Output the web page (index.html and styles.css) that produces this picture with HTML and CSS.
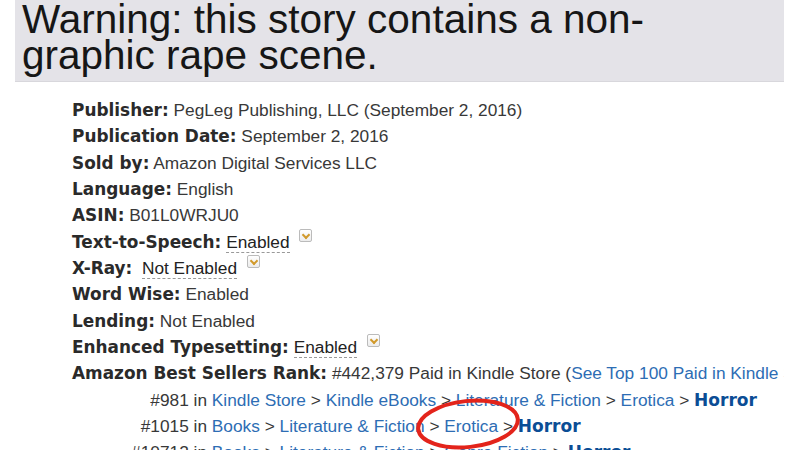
FILE: index.html
```html
<!DOCTYPE html>
<html lang="en">
<head>
    <meta charset="UTF-8">
    <meta name="viewport" content="width=device-width, initial-scale=1">
    <title>Product details</title>
    <link rel="stylesheet" href="styles.css">
</head>
<body>
    <div class="banner">
        <p>Warning: this story contains a non-<br>graphic rape scene.</p>
    </div>
    <div class="details">
        <ul class="list">
            <li><b>Publisher:</b> PegLeg Publishing, LLC (September 2, 2016)</li>
            <li><b>Publication Date:</b> September 2, 2016</li>
            <li><b>Sold by:</b> Amazon Digital Services LLC</li>
            <li><b>Language:</b> English</li>
            <li><b>ASIN:</b> B01L0WRJU0</li>
            <li><b>Text-to-Speech:</b> <span class="tip">Enabled</span> <span class="pop"></span></li>
            <li><b>X-Ray:</b>&nbsp; <span class="tip">Not Enabled</span> <span class="pop"></span></li>
            <li><b>Word Wise:</b> Enabled</li>
            <li><b>Lending:</b> Not Enabled</li>
            <li><b>Enhanced Typesetting:</b> <span class="tip">Enabled</span> <span class="pop"></span></li>
            <li><b>Amazon Best Sellers Rank:</b> #442,379 Paid in Kindle Store (<a href="#">See Top 100 Paid in Kindle Store</a>)</li>
            <li class="rank"><span class="pos">#981 in</span> <a href="#">Kindle Store</a> &gt; <a href="#">Kindle eBooks</a> &gt; <a href="#">Literature &amp; Fiction</a> &gt; <a href="#">Erotica</a> &gt; <a class="leaf" href="#">Horror</a></li>
            <li class="rank"><span class="pos">#1015 in</span> <a href="#">Books</a> &gt; <a href="#">Literature &amp; Fiction</a> &gt; <a href="#">Erotica</a> &gt; <a class="leaf" href="#">Horror</a></li>
            <li class="rank"><span class="pos">#10712 in</span> <a href="#">Books</a> &gt; <a href="#">Literature &amp; Fiction</a> &gt; <a href="#">Genre Fiction</a> &gt; <a class="leaf" href="#">Horror</a></li>
        </ul>
        <!-- red circle drawn over the screenshot -->
        <svg class="mark" width="120" height="60" viewBox="0 0 120 60">
            <ellipse cx="60" cy="30" rx="50" ry="23" fill="none" stroke="#e3241b" stroke-width="4" transform="rotate(-6 60 30)"/>
        </svg>
    </div>
</body>
</html>
```

FILE: styles.css
```css
html, body {
    margin: 0;
    padding: 0;
    height: 100%;
}
body {
    background: #fff;
    overflow: hidden;
}
.banner {
    margin-left: 15px;
    width: 769px;
    height: 82px;
    padding-left: 7px;
    background: #e4e3e8;
    border-bottom: 1px solid #d8d7dc;
    box-sizing: border-box;
    overflow: hidden;
}
.banner p {
    margin: 0;
    padding-top: 1px;
    font-family: "Liberation Sans", Arial, sans-serif;
    font-size: 40.5px;
    line-height: 36px;
    color: #161616;
}
.details {
    position: relative;
    width: 784px;
    overflow: hidden;
    padding-top: 15px;
}
.list {
    list-style: none;
    margin: 0;
    padding: 0 0 0 72px;
    font-family: "Liberation Sans", Arial, sans-serif;
    font-size: 17.3px;
    line-height: 26.33px;
    color: #383838;
}
.list li {
    white-space: nowrap;
}
.list b {
    font-family: "DejaVu Sans", Verdana, sans-serif;
    font-size: 16.9px;
    line-height: 1;
    color: #2a2a2a;
}
.tip {
    border-bottom: 1px dashed #999;
    color: #222;
}
.pop {
    display: inline-block;
    width: 11px;
    height: 11px;
    line-height: 1;
    border: 1px solid #bbb;
    border-radius: 2px;
    background: linear-gradient(#fff, #ececec);
    vertical-align: 6px;
    margin-left: 5px;
    position: relative;
}
.pop::after {
    content: "";
    position: absolute;
    left: 3px;
    top: 2px;
    width: 4px;
    height: 4px;
    border-right: 2px solid #d19a2c;
    border-bottom: 2px solid #d19a2c;
    transform: rotate(45deg);
}
.list a {
    color: #2d6db4;
    text-decoration: none;
}
.list a.leaf {
    font-family: "DejaVu Sans", Verdana, sans-serif;
    font-weight: bold;
    font-size: 17px;
    line-height: 1;
    color: #0b4d95;
}
.rank .pos {
    display: inline-block;
    width: 135px;
    text-align: right;
}
.mark {
    position: absolute;
    left: 408px;
    top: 312px;
}
```
